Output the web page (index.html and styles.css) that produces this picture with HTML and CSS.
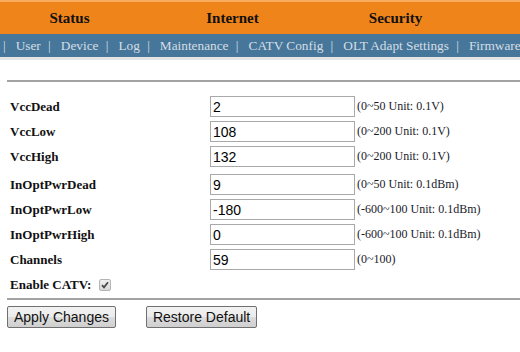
FILE: index.html
```html
<!DOCTYPE html>
<html>
<head>
  <meta charset="utf-8" />
  <title>CATV Config</title>
  <link rel="stylesheet" href="styles.css">
</head>
<body>
  <div class="top">
    <div class="tabs">
      <span class="tab">Status</span>
      <span class="tab">Internet</span>
      <span class="tab">Security</span>
    </div>
  </div>
  <div class="menu">
    <span class="sep">|</span><a>User</a>
    <span class="sep">|</span><a>Device</a>
    <span class="sep">|</span><a>Log</a>
    <span class="sep">|</span><a>Maintenance</a>
    <span class="sep">|</span><a>CATV Config</a>
    <span class="sep">|</span><a>OLT Adapt Settings</a>
    <span class="sep">|</span><a>Firmware</a>
  </div>
  <div class="strip"></div>

  <form class="content">
    <hr />
    <table class="fields">
      <tr>
        <th>VccDead</th>
        <td><input type="text" value="2" /><span class="hint">(0~50 Unit: 0.1V)</span></td>
      </tr>
      <tr>
        <th>VccLow</th>
        <td><input type="text" value="108" /><span class="hint">(0~200 Unit: 0.1V)</span></td>
      </tr>
      <tr>
        <th>VccHigh</th>
        <td><input type="text" value="132" /><span class="hint">(0~200 Unit: 0.1V)</span></td>
      </tr>
      <tr class="gap">
        <th>InOptPwrDead</th>
        <td><input type="text" value="9" /><span class="hint">(0~50 Unit: 0.1dBm)</span></td>
      </tr>
      <tr>
        <th>InOptPwrLow</th>
        <td><input type="text" value="-180" /><span class="hint">(-600~100 Unit: 0.1dBm)</span></td>
      </tr>
      <tr>
        <th>InOptPwrHigh</th>
        <td><input type="text" value="0" /><span class="hint">(-600~100 Unit: 0.1dBm)</span></td>
      </tr>
      <tr>
        <th>Channels</th>
        <td><input type="text" value="59" /><span class="hint">(0~100)</span></td>
      </tr>
    </table>
    <div class="enable">
      <b>Enable CATV:</b>
      <span class="check">
        <svg width="8" height="8" viewBox="0 0 8 8"><path d="M1 4.2 L3 6.3 L7 1.3" fill="none" stroke="#4a4a4a" stroke-width="1.8"/></svg>
      </span>
    </div>
    <hr />
    <div class="buttons">
      <button type="button">Apply Changes</button>
      <button type="button">Restore Default</button>
    </div>
  </form>
</body>
</html>
```

FILE: styles.css
```css
html,
body {
  margin: 0;
  padding: 0;
  background: #fff;
}

* {
  box-sizing: border-box;
}

.top {
  height: 34px;
  background-color: #ef841a;
  border-top: 2px solid #f8ac5c;
  overflow: hidden;
}

.tabs {
  display: flex;
  margin-left: -12px;
}

.tab {
  width: 163px;
  text-align: center;
  font: bold 15px "Liberation Serif", serif;
  line-height: 32px;
  color: #111;
}

.menu {
  height: 23px;
  background-color: #46779a;
  white-space: nowrap;
  overflow: hidden;
  padding-left: 3px;
  font: 13.3px "Liberation Serif", serif;
  line-height: 23px;
  color: #d6dde4;
}

.menu a {
  color: #d6dde4;
}

.sep {
  margin-right: 10px;
}

.menu a + .sep {
  margin-left: 4px;
}

.strip {
  height: 3px;
  background: #e4e4e4;
}

.content {
  padding-left: 7px;
}

hr {
  margin: 0;
  border: 0;
  border-top: 2px solid #a3a3a3;
  border-bottom: 0;
  height: 0;
}

.content > hr:first-child {
  margin-top: 20px;
  margin-bottom: 12px;
}

.fields {
  border-collapse: collapse;
}

.fields th {
  width: 203px;
  padding: 0 0 0 3px;
  text-align: left;
  font: bold 13px "Liberation Serif", serif;
  color: #111;
  height: 25px;
}

.fields td {
  padding: 0;
  height: 25px;
  white-space: nowrap;
}

.fields tr.gap th,
.fields tr.gap td {
  height: 28px;
  padding-top: 3px;
}

.fields input {
  width: 145px;
  height: 21px;
  border: 1px solid #a9a9a9;
  padding: 0 2px;
  margin: 0;
  vertical-align: middle;
  font: 14px "Liberation Sans", Arial, sans-serif;
  color: #000;
}

.hint {
  margin-left: 2px;
  font: 12px "Liberation Serif", serif;
  color: #1a1a2a;
  vertical-align: middle;
}

.enable {
  display: flex;
  align-items: center;
  height: 25px;
  padding-left: 3px;
  font: bold 13px "Liberation Serif", serif;
  color: #111;
}

.check {
  display: inline-flex;
  align-items: center;
  justify-content: center;
  width: 12px;
  height: 12px;
  margin-left: 8px;
  border: 1px solid #b4b4b4;
  background: linear-gradient(#f0f0f0, #d8d8d8);
  border-radius: 2px;
}

.content > .enable + hr {
  margin-top: 1px;
}

.content > hr + .buttons {
  margin-top: 6px;
}

.buttons {
  display: flex;
  gap: 30px;
}

button {
  height: 22px;
  padding: 0 6px;
  border: 1px solid #707070;
  border-radius: 2px;
  background: linear-gradient(#f2f2f2, #ebebeb 50%, #dddddd 50%, #cfcfcf);
  font: 14px "Liberation Sans", Arial, sans-serif;
  color: #111;
}
```
